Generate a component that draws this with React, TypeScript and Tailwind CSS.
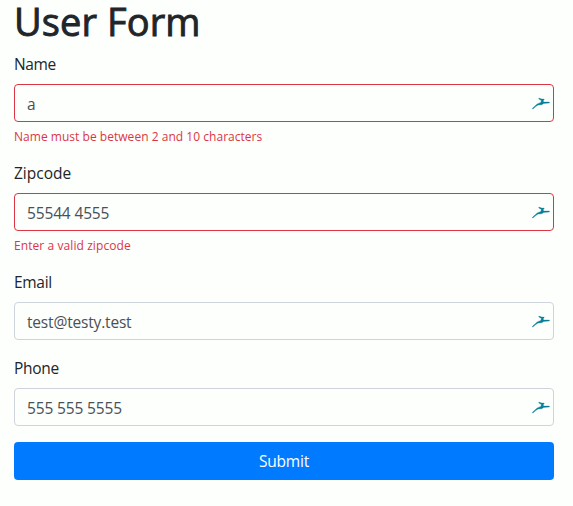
type FieldProps = {
  id: string;
  label: string;
  value: string;
  labelClass?: string;
  valueClass?: string;
  error?: string;
  errorClass?: string;
};

function BirdIcon() {
  return (
    <svg
      className="absolute top-[13px] right-1 h-[13px] w-[18px]"
      viewBox="0 0 18 13"
      fill="#087f96"
      stroke="#087f96"
      strokeWidth="0.3"
      strokeLinejoin="round"
      aria-hidden="true"
    >
      <path d="M0.3 12 L0.7 11 L3.8 8.2 L5.2 6.9 L8.8 5.4 L9.4 3.6 L6.9 2.1 L6.8 1.1 L9.8 2.1 L12.3 2.1 L11.4 3.4 L11.4 5 L17.4 5 L17.4 6 L11.6 6.4 L9.8 7.8 L6 8.1 L3.8 9.6 L1.2 11.8 Z" />
    </svg>
  );
}

function Field({ id, label, value, labelClass = "", valueClass = "", error, errorClass = "" }: FieldProps) {
  return (
    <div className="mb-4">
      <label htmlFor={id} className="mb-2 block h-6 text-[15.5px] leading-[25px]">
        <span className={labelClass}>{label}</span>
      </label>
      <div className="relative">
        <input
          id={id}
          defaultValue={value}
          className={`block h-[38px] w-full rounded border bg-transparent px-3 pt-[7px] pb-[5px] text-[15.5px] leading-6 text-[#495057] outline-none ${error ? "border-[#dc3545]" : "border-[#ced4da]"} ${valueClass}`}
        />
        <BirdIcon />
      </div>
      {error && (
        <div className="mt-1 h-[19px] text-[12px] leading-[21px] text-[#dc3545]">
          <span className={errorClass}>{error}</span>
        </div>
      )}
    </div>
  );
}

export default function App() {
  return (
    <main className="flow-root h-[506px] bg-[#fdfffd] pr-[19px] pl-[14px] font-['Open_Sans','Noto_Sans',sans-serif] text-[#212529]">
      <h1 className="mb-2 h-11 text-[38px] leading-[43px] font-normal tracking-[0.1px] [-webkit-text-stroke:0.9px_#212529]">
        User Form
      </h1>
      <form>
        <Field
          id="name"
          label="Name"
          labelClass="tracking-[-0.35px]"
          value="a"
          error="Name must be between 2 and 10 characters"
          errorClass="tracking-[0.03px]"
        />
        <Field
          id="zipcode"
          label="Zipcode"
          value="55544 4555"
          valueClass="tracking-[-0.15px]"
          error="Enter a valid zipcode"
          errorClass="tracking-[0.08px]"
        />
        <Field
          id="email"
          label="Email"
          labelClass="tracking-[-0.3px]"
          value="test@testy.test"
          valueClass="tracking-[-0.18px]"
        />
        <Field
          id="phone"
          label="Phone"
          labelClass="tracking-[-0.3px]"
          value="555 555 5555"
          valueClass="tracking-[-0.15px]"
        />
        <button
          type="button"
          className="block h-[38px] w-full rounded bg-[#007bff] text-[15.5px] leading-6 tracking-[-0.2px] text-white"
        >
          Submit
        </button>
      </form>
    </main>
  );
}
